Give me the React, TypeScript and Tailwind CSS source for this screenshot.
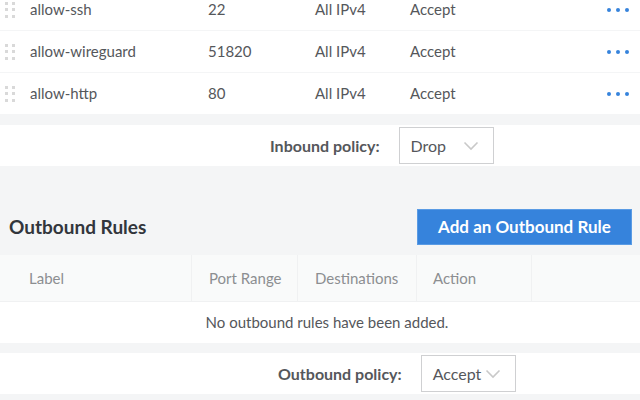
const rules = [
  { label: 'allow-ssh', port: '22' },
  { label: 'allow-wireguard', port: '51820' },
  { label: 'allow-http', port: '80' },
];

function DragHandle() {
  return (
    <div className="grid grid-cols-2 gap-x-[4px] gap-y-[3.5px] w-[10px]">
      {Array.from({ length: 6 }).map((_, i) => (
        <span key={i} className="w-[3px] h-[3px] bg-[#d9d9d9]" />
      ))}
    </div>
  );
}

function Chevron() {
  return (
    <svg width="16" height="10" viewBox="0 0 16 10" fill="none">
      <path d="M1.5 1.5 L8 8 L14.5 1.5" stroke="#c9c9c9" strokeWidth="1.6" />
    </svg>
  );
}

function PolicyBar({ label, value, pl, gap }: { label: string; value: string; pl: string; gap: string }) {
  return (
    <div className={`bg-white h-[41px] flex items-center ${pl}`}>
      <span className={`text-[16px] font-bold text-[#55575b] ${gap}`}>{label}</span>
      <div className="h-[37px] w-[95px] border border-[#cfd0d2] flex items-center justify-between pl-[11px] pr-[14px]">
        <span className="text-[16px] text-[#55575b]">{value}</span>
        <Chevron />
      </div>
    </div>
  );
}

export default function App() {
  return (
    <div className="w-[640px] h-[400px] overflow-hidden bg-[#f4f5f6] text-[#55575b]" style={{ fontFamily: 'Lato, "Open Sans", sans-serif' }}>
      <div className="bg-white -mt-[11px]">
        {rules.map((r) => (
          <div key={r.label} className="h-[42px] flex items-center border-b border-[#f4f5f6] text-[15px]">
            <div className="w-[30px] pl-[5px]">
              <DragHandle />
            </div>
            <div className="w-[178px]">{r.label}</div>
            <div className="w-[107px]">{r.port}</div>
            <div className="w-[95px]">All IPv4</div>
            <div className="flex-1">Accept</div>
            <div className="flex gap-[5px] pr-[11px]">
              <span className="w-[4px] h-[4px] rounded-full bg-[#3683dc]" />
              <span className="w-[4px] h-[4px] rounded-full bg-[#3683dc]" />
              <span className="w-[4px] h-[4px] rounded-full bg-[#3683dc]" />
            </div>
          </div>
        ))}
      </div>

      <div className="mt-[10px]">
        <PolicyBar label="Inbound policy:" value="Drop" pl="pl-[270px]" gap="mr-[19px]" />
      </div>

      <div className="mt-[43px] flex items-center justify-between pl-[9px] pr-[8px]">
        <h2 className="text-[19px] font-bold text-[#32363c]">Outbound Rules</h2>
        <button className="h-[36px] w-[215px] bg-[#3683dc] text-white text-[17px] font-bold border border-[#5a9be4]">
          Add an Outbound Rule
        </button>
      </div>

      <div className="mt-[10px]">
        <div className="h-[47px] flex bg-[#f9fafa] border-b border-[#f0f1f2] text-[15px] text-[#8c8e91]">
          <div className="w-[192px] pl-[29px] flex items-center border-r border-[#f0f1f2]">Label</div>
          <div className="w-[106px] pl-[17px] flex items-center border-r border-[#f0f1f2]">Port Range</div>
          <div className="w-[119px] pl-[17px] flex items-center border-r border-[#f0f1f2]">Destinations</div>
          <div className="w-[115px] pl-[16px] flex items-center border-r border-[#f0f1f2]">Action</div>
          <div className="flex-1" />
        </div>
        <div className="h-[41px] bg-white flex items-center justify-center text-[15px] pl-[14px]">
          No outbound rules have been added.
        </div>
      </div>

      <div className="mt-[10px]">
        <PolicyBar label="Outbound policy:" value="Accept" pl="pl-[278px]" gap="mr-[19px]" />
      </div>
    </div>
  );
}
